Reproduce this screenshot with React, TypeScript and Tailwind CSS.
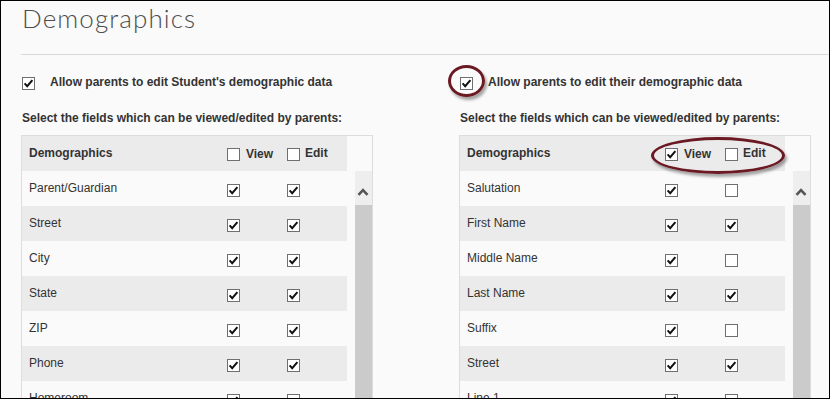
import React from "react";

type Row = { label: string; view: boolean; edit: boolean };

const studentRows: Row[] = [
    { label: "Parent/Guardian", view: true, edit: true },
    { label: "Street", view: true, edit: true },
    { label: "City", view: true, edit: true },
    { label: "State", view: true, edit: true },
    { label: "ZIP", view: true, edit: true },
    { label: "Phone", view: true, edit: true },
    { label: "Homeroom", view: true, edit: false },
];

const parentRows: Row[] = [
    { label: "Salutation", view: true, edit: false },
    { label: "First Name", view: true, edit: true },
    { label: "Middle Name", view: true, edit: false },
    { label: "Last Name", view: true, edit: true },
    { label: "Suffix", view: true, edit: false },
    { label: "Street", view: true, edit: true },
    { label: "Line 1", view: true, edit: false },
];

function Box({ checked, className = "" }: { checked: boolean; className?: string }) {
    return (
        <span className={`block h-[13px] w-[13px] shrink-0 border border-[#6f6f6f] bg-white ${className}`}>
            {checked && (
                <svg viewBox="0 0 11 11" className="h-[11px] w-[11px]">
                    <path d="M1.6 5.4 L4.2 8.2 L9.4 2.2" fill="none" stroke="#111" strokeWidth="2" />
                </svg>
            )}
        </span>
    );
}

function Section({
    title,
    rows,
    viewAll,
}: {
    title: string;
    rows: Row[];
    viewAll: boolean;
}) {
    return (
        <div className="w-[352px] shrink-0">
            {/* allow toggle */}
            <div className="mt-[20px] flex items-start">
                <Box checked className="ml-px mt-[2px]" />
                <span className="ml-[15px] text-[12px] font-bold leading-[14px]">{title}</span>
            </div>
            <p className="ml-px mt-[21px] text-[12px] font-bold leading-[14px]">
                Select the fields which can be viewed/edited by parents:
            </p>

            {/* table */}
            <div className="mt-[10px] flex border border-[#dddddd]">
                <div className="w-[325px]">
                    <div className="flex h-[35px] items-start bg-[#ebebeb]">
                        <span className="w-[205px] pl-[7px] pt-[10px] text-[12px] font-bold leading-[14px]">
                            Demographics
                        </span>
                        <div className="flex w-[60px] items-start pt-[12px]">
                            <Box checked={viewAll} />
                            <span className="ml-[6px] -mt-[1px] text-[12px] font-bold leading-[14px]">View</span>
                        </div>
                        <div className="flex items-start pt-[12px]">
                            <Box checked={false} />
                            <span className="ml-[5px] -mt-[2px] text-[12px] font-bold leading-[14px]">Edit</span>
                        </div>
                    </div>
                    {rows.map((row, i) => (
                        <div
                            key={row.label}
                            className={`flex h-[35px] items-start ${i % 2 === 1 ? "bg-[#ebebeb]" : "bg-[#fafafa]"}`}
                        >
                            <span className="w-[205px] pl-[7px] pt-[10px] text-[12px] leading-[14px]">{row.label}</span>
                            <div className="w-[60px] pt-[13px]">
                                <Box checked={row.view} />
                            </div>
                            <div className="pt-[13px]">
                                <Box checked={row.edit} />
                            </div>
                        </div>
                    ))}
                </div>

                {/* scrollbar */}
                <div className="ml-[8px] flex w-[17px] flex-col">
                    <div className="h-[35px]" />
                    <div className="h-[34px] bg-[#eeeeee] pl-[2px] pt-[16px]">
                        <svg viewBox="0 0 12 9" className="h-[9px] w-[12px]">
                            <path d="M1.5 7.8 L6 3.2 L10.5 7.8" fill="none" stroke="#555" strokeWidth="2.6" />
                        </svg>
                    </div>
                    <div className="h-[300px] bg-[#cbcbcb]" />
                </div>
            </div>
        </div>
    );
}

export default function App() {
    return (
        <div className="relative h-[399px] w-[830px] overflow-hidden border border-black bg-[#fafafa] font-['Liberation_Sans',Arial,sans-serif] text-[#333]">
            <div className="pl-[20px]">
                <h1 className="h-[53px] pl-px pt-[2px] font-['Lato',sans-serif] text-[26px] font-light leading-[31px] tracking-[1.1px] text-[#4d4d4d]">
                    Demographics
                </h1>
                <div className="h-px bg-[#d9d9d9]" />

                <div className="flex gap-[86px]">
                    <Section title="Allow parents to edit Student's demographic data" rows={studentRows} viewAll={false} />
                    <Section title="Allow parents to edit their demographic data" rows={parentRows} viewAll />
                </div>
            </div>

            {/* annotation marks */}
            <div className="absolute left-[447px] top-[64px] h-[32px] w-[37px] rounded-[50%] border-[3px] border-[#6b1a23] shadow-[2px_3px_3px_rgba(0,0,0,0.35)]" />
            <div className="absolute left-[650px] top-[136px] h-[37px] w-[134px] rounded-[50%] border-[3px] border-[#6b1a23] shadow-[2px_3px_3px_rgba(0,0,0,0.35)]" />
        </div>
    );
}
